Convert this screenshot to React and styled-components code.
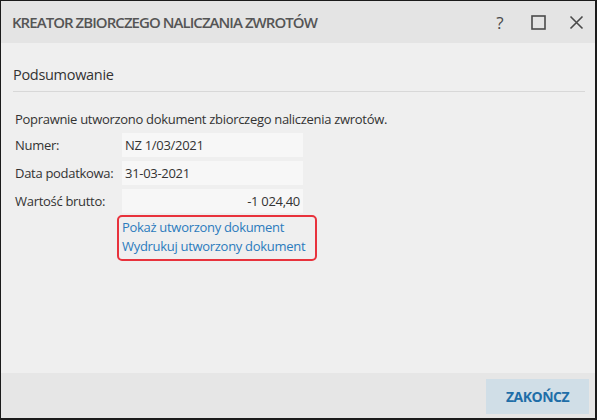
import React from "react";
import styled, { createGlobalStyle } from "styled-components";

const Global = createGlobalStyle`
  html, body { margin: 0; padding: 0; background: #fff; }
  body { font-family: "Open Sans", "Noto Sans", sans-serif; }
`;

const Window = styled.div`
  box-sizing: border-box;
  width: 597px;
  height: 420px;
  border-style: solid;
  border-color: #1b1b1b;
  border-width: 1px 2px 2px 1px;
  display: flex;
  flex-direction: column;
  background: #efefef;
`;

const TitleBar = styled.div`
  height: 42px;
  flex: none;
  background: #e4e4e4;
  display: flex;
  align-items: center;
  padding: 0 11px 0 11px;
`;

const Title = styled.div`
  flex: 1;
  font-size: 15px;
  font-weight: 600;
  color: #555;
  letter-spacing: -0.95px;
`;

const Controls = styled.div`
  display: flex;
  align-items: center;
  gap: 22px;
`;

const Ctrl = styled.div`
  width: 16px;
  height: 16px;
  display: flex;
  align-items: center;
  justify-content: center;
  color: #4a4a4a;
  font-size: 17px;
`;

const Body = styled.div`
  flex: 1;
  padding: 22px 10px 0 12px;
  color: #333;
  font-size: 13px;
  letter-spacing: -0.3px;
`;

const Section = styled.div`
  font-size: 14.5px;
  letter-spacing: -0.3px;
  color: #333;
  padding-bottom: 7px;
  border-bottom: 1px solid #d8d8d8;
`;

const Message = styled.div`
  margin-top: 18px;
  padding-left: 2px;
`;

const Form = styled.div`
  margin-top: 5px;
  display: grid;
  grid-template-columns: 107px 181px;
  row-gap: 4px;
  padding-left: 2px;
  align-items: center;
`;

const Label = styled.div`
  line-height: 24px;
`;

const Field = styled.div`
  height: 24px;
  line-height: 24px;
  background: #f7f7f7;
  padding: 0 3px;
  text-align: ${(p) => (p.$right ? "right" : "left")};
`;

const Links = styled.div`
  grid-column: 2;
  margin-left: -5px;
  margin-top: -2px;
  width: 200px;
  box-sizing: border-box;
  border: 2px solid #e8323c;
  border-radius: 5px;
  padding: 1px 3px 3px 3px;
  display: flex;
  flex-direction: column;
`;

const Link = styled.a`
  color: #2b7bbd;
  line-height: 19px;
  white-space: nowrap;
  cursor: pointer;
`;

const Footer = styled.div`
  height: 45px;
  flex: none;
  background: #e6e6e6;
  display: flex;
  align-items: center;
  justify-content: flex-end;
  padding: 6px 6px 4px 0;
  box-sizing: border-box;
`;

const Button = styled.button`
  width: 103px;
  height: 35px;
  border: none;
  background: #d0dee7;
  color: #1f6ea8;
  font-family: "Open Sans", sans-serif;
  font-weight: 700;
  font-size: 14px;
  letter-spacing: -0.5px;
`;

export default function App() {
  return (
    <>
      <Global />
      <Window>
        <TitleBar>
          <Title>KREATOR ZBIORCZEGO NALICZANIA ZWROTÓW</Title>
          <Controls>
            <Ctrl>?</Ctrl>
            <Ctrl>
              <svg width="15" height="15" viewBox="0 0 15 15">
                <rect x="1" y="1" width="13" height="13" fill="none" stroke="#4a4a4a" strokeWidth="1.6" />
              </svg>
            </Ctrl>
            <Ctrl>
              <svg width="15" height="15" viewBox="0 0 15 15">
                <path d="M1.5 1.5 L13.5 13.5 M13.5 1.5 L1.5 13.5" stroke="#4a4a4a" strokeWidth="1.6" />
              </svg>
            </Ctrl>
          </Controls>
        </TitleBar>
        <Body>
          <Section>Podsumowanie</Section>
          <Message>Poprawnie utworzono dokument zbiorczego naliczenia zwrotów.</Message>
          <Form>
            <Label>Numer:</Label>
            <Field>NZ 1/03/2021</Field>
            <Label>Data podatkowa:</Label>
            <Field>31-03-2021</Field>
            <Label>Wartość brutto:</Label>
            <Field $right>-1 024,40</Field>
            <Links>
              <Link>Pokaż utworzony dokument</Link>
              <Link>Wydrukuj utworzony dokument</Link>
            </Links>
          </Form>
        </Body>
        <Footer>
          <Button>ZAKOŃCZ</Button>
        </Footer>
      </Window>
    </>
  );
}
